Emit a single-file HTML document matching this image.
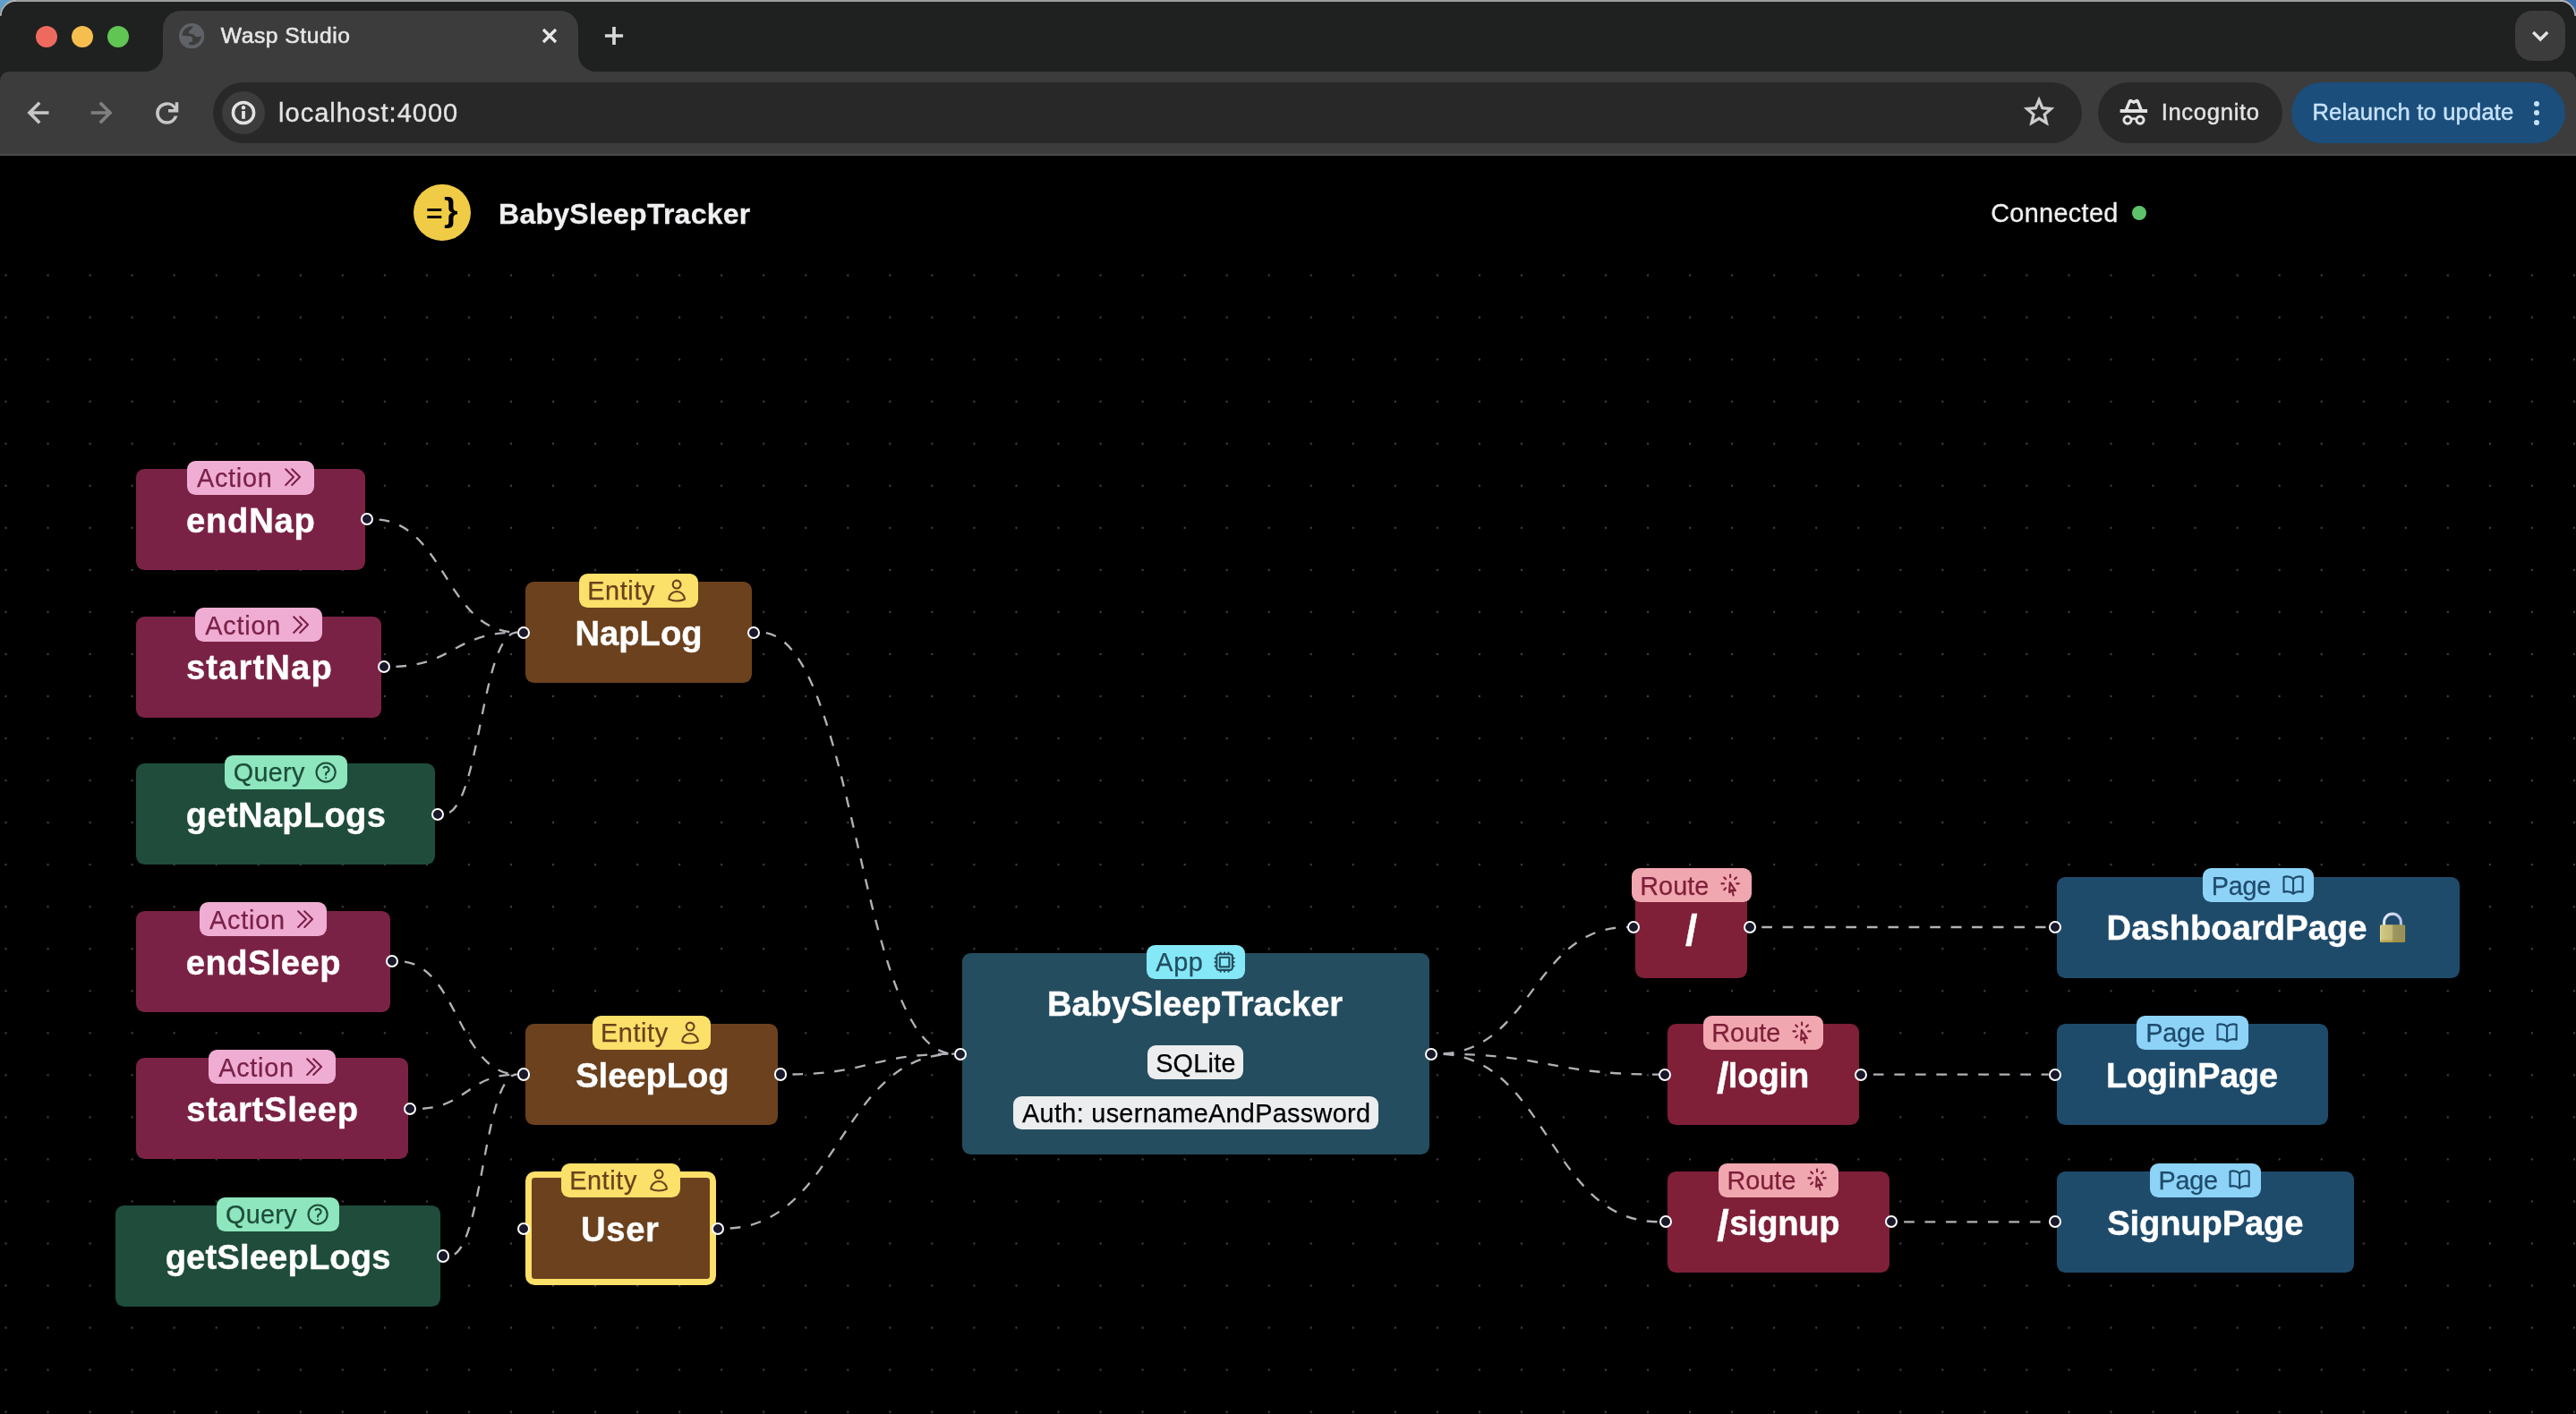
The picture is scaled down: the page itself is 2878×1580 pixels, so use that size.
<!DOCTYPE html>
<html lang="en"><head><meta charset="utf-8"><title>Wasp Studio</title>
<style>
html,body{margin:0;padding:0;background:#000;}
body{width:2878px;height:1580px;overflow:hidden;position:relative;font-family:"Liberation Sans",sans-serif;}
.t{position:absolute;white-space:pre;display:block;}
.abs{position:absolute;}
#chrome{position:absolute;left:0;top:0;width:2878px;height:174px;background:#1f2020;overflow:hidden;}
#page{position:absolute;left:0;top:0;width:2878px;height:1580px;}
.node{position:absolute;border-radius:9.4px;box-sizing:border-box;}
.badge{position:absolute;height:38.1px;border-radius:9.4px;}
.badge svg{position:absolute;top:4.95px;width:28.2px;height:28.2px;fill:none;stroke-width:1.8;stroke-linecap:round;stroke-linejoin:round;}
.h{position:absolute;width:14.1px;height:14.1px;box-sizing:border-box;border-radius:50%;background:#1a192b;border:2.35px solid #fff;}
.pill{position:absolute;height:37.6px;border-radius:9.4px;background:#ecedef;}
</style></head><body>

<div id="wrap" style="position:absolute;left:0;top:0;width:2878px;height:1580px;will-change:transform;">
<div id="page">
<svg class="abs" style="left:0;top:284px" width="2878" height="1296"><defs><pattern id="dots" x="-17.02" y="0.08" width="47.04" height="47.04" patternUnits="userSpaceOnUse"><circle cx="23.52" cy="23.52" r="1.15" fill="#434347"/></pattern></defs><rect width="2878" height="1296" fill="url(#dots)"/></svg>
<svg class="abs" style="left:0;top:0" width="2878" height="1580" fill="none" stroke="#b1b1b7" stroke-width="2.35" stroke-dasharray="11.76" stroke-dashoffset="17"><path d="M417.00,580.30 C497.35,580.30 497.35,706.60 577.70,706.60"/><path d="M435.70,745.00 C506.70,745.00 506.70,706.60 577.70,706.60"/><path d="M495.90,909.60 C536.80,909.60 536.80,706.60 577.70,706.60"/><path d="M445.40,1074.20 C511.55,1074.20 511.55,1200.50 577.70,1200.50"/><path d="M465.50,1238.90 C521.60,1238.90 521.60,1200.50 577.70,1200.50"/><path d="M501.70,1403.50 C539.70,1403.50 539.70,1200.50 577.70,1200.50"/><path d="M849.30,706.60 C957.65,706.60 957.65,1177.65 1066.00,1177.65"/><path d="M878.70,1200.50 C972.35,1200.50 972.35,1177.65 1066.00,1177.65"/><path d="M809.10,1372.65 C937.55,1372.65 937.55,1177.65 1066.00,1177.65"/><path d="M1606.10,1177.65 C1712.05,1177.65 1712.05,1036.00 1818.00,1036.00"/><path d="M1606.10,1177.65 C1729.75,1177.65 1729.75,1200.60 1853.40,1200.60"/><path d="M1606.10,1177.65 C1729.80,1177.65 1729.80,1365.30 1853.50,1365.30"/><path d="M1961.60,1036.00 C2125.10,1036.00 2125.10,1036.00 2288.60,1036.00"/><path d="M2086.20,1200.60 C2187.40,1200.60 2187.40,1200.60 2288.60,1200.60"/><path d="M2120.40,1365.30 C2204.50,1365.30 2204.50,1365.30 2288.60,1365.30"/></svg>
<div class="node" style="left:152.2px;top:523.8px;width:255.4px;height:113.0px;background:#7a2245;"></div>
<div class="badge" style="left:209.10px;top:514.50px;width:141.6px;background:#efadd3;"><svg viewBox="0 0 24 24" style="left:104.00px;stroke:#7b2148"><path d="M11.25 4.5l7.5 7.5-7.5 7.5m-6-15l7.5 7.5-7.5 7.5"/></svg></div>
<span class="t" style="left:219.89px;top:516.99px;font-size:28.8px;line-height:34.56px;color:#7b2148;letter-spacing:0.794px;-webkit-text-stroke:0.25px #7b2148;">Action</span>
<span class="t" style="left:208.05px;top:559.09px;font-size:38.2px;line-height:45.84px;font-weight:700;color:#fff;letter-spacing:0.752px;-webkit-text-stroke:0.4px #fff;">endNap</span>
<div class="node" style="left:152.2px;top:688.5px;width:274.1px;height:113.0px;background:#7a2245;"></div>
<div class="badge" style="left:218.45px;top:679.20px;width:141.6px;background:#efadd3;"><svg viewBox="0 0 24 24" style="left:104.00px;stroke:#7b2148"><path d="M11.25 4.5l7.5 7.5-7.5 7.5m-6-15l7.5 7.5-7.5 7.5"/></svg></div>
<span class="t" style="left:229.24px;top:681.99px;font-size:28.8px;line-height:34.56px;color:#7b2148;letter-spacing:0.794px;-webkit-text-stroke:0.25px #7b2148;">Action</span>
<span class="t" style="left:207.89px;top:723.09px;font-size:38.2px;line-height:45.84px;font-weight:700;color:#fff;letter-spacing:1.141px;-webkit-text-stroke:0.4px #fff;">startNap</span>
<div class="node" style="left:152.2px;top:853.1px;width:334.3px;height:113.0px;background:#1f4c3b;"></div>
<div class="badge" style="left:251.05px;top:843.80px;width:136.6px;background:#8de6bd;"><svg viewBox="0 0 24 24" style="left:99.00px;stroke:#1e4c3b"><path d="M9.879 7.519c1.171-1.025 3.071-1.025 4.242 0 1.172 1.025 1.172 2.687 0 3.712-.203.179-.43.326-.67.442-.745.361-1.45.999-1.45 1.827v.75M21 12a9 9 0 11-18 0 9 9 0 0118 0zm-9 5.25h.008v.008H12v-.008z"/></svg></div>
<span class="t" style="left:260.68px;top:845.99px;font-size:28.8px;line-height:34.56px;color:#1e4c3b;letter-spacing:0.320px;-webkit-text-stroke:0.25px #1e4c3b;">Query</span>
<span class="t" style="left:207.82px;top:888.09px;font-size:38.2px;line-height:45.84px;font-weight:700;color:#fff;letter-spacing:0.270px;-webkit-text-stroke:0.4px #fff;">getNapLogs</span>
<div class="node" style="left:152.2px;top:1017.7px;width:283.8px;height:113.0px;background:#7a2245;"></div>
<div class="badge" style="left:223.30px;top:1008.40px;width:141.6px;background:#efadd3;"><svg viewBox="0 0 24 24" style="left:104.00px;stroke:#7b2148"><path d="M11.25 4.5l7.5 7.5-7.5 7.5m-6-15l7.5 7.5-7.5 7.5"/></svg></div>
<span class="t" style="left:234.09px;top:1010.99px;font-size:28.8px;line-height:34.56px;color:#7b2148;letter-spacing:0.794px;-webkit-text-stroke:0.25px #7b2148;">Action</span>
<span class="t" style="left:207.75px;top:1053.09px;font-size:38.2px;line-height:45.84px;font-weight:700;color:#fff;letter-spacing:0.430px;-webkit-text-stroke:0.4px #fff;">endSleep</span>
<div class="node" style="left:152.2px;top:1182.4px;width:303.9px;height:113.0px;background:#7a2245;"></div>
<div class="badge" style="left:233.35px;top:1173.10px;width:141.6px;background:#efadd3;"><svg viewBox="0 0 24 24" style="left:104.00px;stroke:#7b2148"><path d="M11.25 4.5l7.5 7.5-7.5 7.5m-6-15l7.5 7.5-7.5 7.5"/></svg></div>
<span class="t" style="left:244.14px;top:1175.99px;font-size:28.8px;line-height:34.56px;color:#7b2148;letter-spacing:0.794px;-webkit-text-stroke:0.25px #7b2148;">Action</span>
<span class="t" style="left:208.34px;top:1217.09px;font-size:38.2px;line-height:45.84px;font-weight:700;color:#fff;letter-spacing:0.793px;-webkit-text-stroke:0.4px #fff;">startSleep</span>
<div class="node" style="left:128.9px;top:1347.0px;width:363.4px;height:113.0px;background:#1f4c3b;"></div>
<div class="badge" style="left:242.30px;top:1337.70px;width:136.6px;background:#8de6bd;"><svg viewBox="0 0 24 24" style="left:99.00px;stroke:#1e4c3b"><path d="M9.879 7.519c1.171-1.025 3.071-1.025 4.242 0 1.172 1.025 1.172 2.687 0 3.712-.203.179-.43.326-.67.442-.745.361-1.45.999-1.45 1.827v.75M21 12a9 9 0 11-18 0 9 9 0 0118 0zm-9 5.25h.008v.008H12v-.008z"/></svg></div>
<span class="t" style="left:251.93px;top:1339.99px;font-size:28.8px;line-height:34.56px;color:#1e4c3b;letter-spacing:0.320px;-webkit-text-stroke:0.25px #1e4c3b;">Query</span>
<span class="t" style="left:184.67px;top:1382.09px;font-size:38.2px;line-height:45.84px;font-weight:700;color:#fff;letter-spacing:0.134px;-webkit-text-stroke:0.4px #fff;">getSleepLogs</span>
<div class="node" style="left:587.1px;top:650.1px;width:252.8px;height:113.0px;background:#6b411e;"></div>
<div class="badge" style="left:647.20px;top:640.80px;width:132.6px;background:#fbe069;"><svg viewBox="0 0 24 24" style="left:95.00px;stroke:#6b401d"><path d="M15.75 6a3.75 3.75 0 11-7.5 0 3.75 3.75 0 017.5 0zM4.501 20.118a7.5 7.5 0 0114.998 0A17.933 17.933 0 0112 21.75c-2.676 0-5.216-.584-7.499-1.632z"/></svg></div>
<span class="t" style="left:656.23px;top:642.99px;font-size:28.8px;line-height:34.56px;color:#6b401d;letter-spacing:0.636px;-webkit-text-stroke:0.25px #6b401d;">Entity</span>
<span class="t" style="left:642.44px;top:685.09px;font-size:38.2px;line-height:45.84px;font-weight:700;color:#fff;letter-spacing:-0.003px;-webkit-text-stroke:0.4px #fff;">NapLog</span>
<div class="node" style="left:587.1px;top:1144.0px;width:282.2px;height:113.0px;background:#6b411e;"></div>
<div class="badge" style="left:661.90px;top:1134.70px;width:132.6px;background:#fbe069;"><svg viewBox="0 0 24 24" style="left:95.00px;stroke:#6b401d"><path d="M15.75 6a3.75 3.75 0 11-7.5 0 3.75 3.75 0 017.5 0zM4.501 20.118a7.5 7.5 0 0114.998 0A17.933 17.933 0 0112 21.75c-2.676 0-5.216-.584-7.499-1.632z"/></svg></div>
<span class="t" style="left:670.93px;top:1136.99px;font-size:28.8px;line-height:34.56px;color:#6b401d;letter-spacing:0.636px;-webkit-text-stroke:0.25px #6b401d;">Entity</span>
<span class="t" style="left:643.24px;top:1179.09px;font-size:38.2px;line-height:45.84px;font-weight:700;color:#fff;letter-spacing:-0.081px;-webkit-text-stroke:0.4px #fff;">SleepLog</span>
<div class="node" style="left:587.1px;top:1309.1px;width:212.6px;height:127.1px;background:#6b411e;border:7.06px solid #fbe069;border-radius:10.5px;"></div>
<div class="badge" style="left:627.10px;top:1299.80px;width:132.6px;background:#fbe069;"><svg viewBox="0 0 24 24" style="left:95.00px;stroke:#6b401d"><path d="M15.75 6a3.75 3.75 0 11-7.5 0 3.75 3.75 0 017.5 0zM4.501 20.118a7.5 7.5 0 0114.998 0A17.933 17.933 0 0112 21.75c-2.676 0-5.216-.584-7.499-1.632z"/></svg></div>
<span class="t" style="left:636.13px;top:1301.99px;font-size:28.8px;line-height:34.56px;color:#6b401d;letter-spacing:0.636px;-webkit-text-stroke:0.25px #6b401d;">Entity</span>
<span class="t" style="left:649.10px;top:1351.09px;font-size:38.2px;line-height:45.84px;font-weight:700;color:#fff;letter-spacing:0.649px;-webkit-text-stroke:0.4px #fff;">User</span>
<div class="node" style="left:1075.4px;top:1064.9px;width:521.3px;height:225.5px;background:#254d60;"></div>
<div class="badge" style="left:1280.60px;top:1055.60px;width:110.9px;background:#85e8f6;"><svg viewBox="0 0 24 24" style="left:73.30px;stroke:#234d60"><path d="M8.25 3v1.5M4.5 8.25H3m18 0h-1.5M4.5 12H3m18 0h-1.5m-15 3.75H3m18 0h-1.5M8.25 19.5V21M12 3v1.5m0 15V21m3.75-18v1.5m0 15V21m-9-1.5h10.5a2.25 2.25 0 002.25-2.25V6.75a2.25 2.25 0 00-2.25-2.25H6.75A2.25 2.25 0 004.5 6.75v10.5a2.25 2.25 0 002.25 2.25zm.75-12h9v9h-9v-9z"/></svg></div>
<span class="t" style="left:1291.29px;top:1057.99px;font-size:28.8px;line-height:34.56px;color:#234d60;letter-spacing:0.680px;-webkit-text-stroke:0.25px #234d60;">App</span>
<span class="t" style="left:1169.89px;top:1099.09px;font-size:38.2px;line-height:45.84px;font-weight:700;color:#fff;letter-spacing:-0.056px;-webkit-text-stroke:0.4px #fff;">BabySleepTracker</span>
<div class="pill" style="left:1282.3px;top:1168.2px;width:107.1px"></div>
<span class="t" style="left:1291.15px;top:1170.99px;font-size:28.8px;line-height:34.56px;color:#000;letter-spacing:0.245px;-webkit-text-stroke:0.25px #000;">SQLite</span>
<div class="pill" style="left:1132px;top:1224.8px;width:407.8px"></div>
<span class="t" style="left:1142.09px;top:1226.99px;font-size:28.8px;line-height:34.56px;color:#000;letter-spacing:0.330px;-webkit-text-stroke:0.25px #000;">Auth: usernameAndPassword</span>
<div class="node" style="left:1827.4px;top:979.5px;width:124.8px;height:113.0px;background:#7f1f38;"></div>
<div class="badge" style="left:1822.70px;top:970.20px;width:134.2px;background:#f1a7b0;"><svg viewBox="0 0 24 24" style="left:96.60px;stroke:#7e1f39"><path d="M15.042 21.672L13.684 16.6m0 0l-2.51 2.225.569-9.47 5.227 7.917-3.286-.672zM12 2.25V4.5m5.834.166l-1.591 1.591M20.25 10.5H18M7.757 14.743l-1.59 1.59M6 10.5H3.75m4.007-4.243l-1.59-1.59"/></svg></div>
<span class="t" style="left:1832.23px;top:972.99px;font-size:28.8px;line-height:34.56px;color:#7e1f39;letter-spacing:0.055px;-webkit-text-stroke:0.25px #7e1f39;">Route</span>
<span class="t" style="left:1883.07px;top:1010.34px;font-size:48.5px;line-height:58.2px;font-weight:700;color:#fff;letter-spacing:0.000px;-webkit-text-stroke:0.4px #fff;">/</span>
<div class="node" style="left:1862.8px;top:1144.1px;width:214.0px;height:113.0px;background:#7f1f38;"></div>
<div class="badge" style="left:1902.70px;top:1134.80px;width:134.2px;background:#f1a7b0;"><svg viewBox="0 0 24 24" style="left:96.60px;stroke:#7e1f39"><path d="M15.042 21.672L13.684 16.6m0 0l-2.51 2.225.569-9.47 5.227 7.917-3.286-.672zM12 2.25V4.5m5.834.166l-1.591 1.591M20.25 10.5H18M7.757 14.743l-1.59 1.59M6 10.5H3.75m4.007-4.243l-1.59-1.59"/></svg></div>
<span class="t" style="left:1912.23px;top:1136.99px;font-size:28.8px;line-height:34.56px;color:#7e1f39;letter-spacing:0.055px;-webkit-text-stroke:0.25px #7e1f39;">Route</span>
<span class="t" style="left:1918.10px;top:1179.09px;font-size:38.2px;line-height:45.84px;font-weight:700;color:#fff;letter-spacing:-0.168px;-webkit-text-stroke:0.4px #fff;"><span style="font-size:48.5px;line-height:0;position:relative;top:6px;letter-spacing:0;margin-right:-0.74px">/</span>login</span>
<div class="node" style="left:1862.9px;top:1308.8px;width:248.1px;height:113.0px;background:#7f1f38;"></div>
<div class="badge" style="left:1919.85px;top:1299.50px;width:134.2px;background:#f1a7b0;"><svg viewBox="0 0 24 24" style="left:96.60px;stroke:#7e1f39"><path d="M15.042 21.672L13.684 16.6m0 0l-2.51 2.225.569-9.47 5.227 7.917-3.286-.672zM12 2.25V4.5m5.834.166l-1.591 1.591M20.25 10.5H18M7.757 14.743l-1.59 1.59M6 10.5H3.75m4.007-4.243l-1.59-1.59"/></svg></div>
<span class="t" style="left:1929.38px;top:1301.99px;font-size:28.8px;line-height:34.56px;color:#7e1f39;letter-spacing:0.055px;-webkit-text-stroke:0.25px #7e1f39;">Route</span>
<span class="t" style="left:1918.20px;top:1344.09px;font-size:38.2px;line-height:45.84px;font-weight:700;color:#fff;letter-spacing:-0.352px;-webkit-text-stroke:0.4px #fff;"><span style="font-size:48.5px;line-height:0;position:relative;top:6px;letter-spacing:0;margin-right:0.52px">/</span>signup</span>
<div class="node" style="left:2298.0px;top:979.5px;width:450.2px;height:113.0px;background:#1f4b6b;"></div>
<div class="badge" style="left:2460.95px;top:970.20px;width:124.3px;background:#8dd3f7;"><svg viewBox="0 0 24 24" style="left:86.70px;stroke:#1f4b6c"><path d="M12 6.042A8.967 8.967 0 006 3.75c-1.052 0-2.062.18-3 .512v14.25A8.987 8.987 0 016 18c2.305 0 4.408.867 6 2.292m0-14.25a8.966 8.966 0 016-2.292c1.052 0 2.062.18 3 .512v14.25A8.987 8.987 0 0018 18a8.967 8.967 0 00-6 2.292m0-14.25v14.25"/></svg></div>
<span class="t" style="left:2470.78px;top:972.99px;font-size:28.8px;line-height:34.56px;color:#1f4b6c;letter-spacing:-0.238px;-webkit-text-stroke:0.25px #1f4b6c;">Page</span>
<span class="t" style="left:2353.54px;top:1014.09px;font-size:38.2px;line-height:45.84px;font-weight:700;color:#fff;letter-spacing:0.020px;-webkit-text-stroke:0.4px #fff;">DashboardPage</span>
<svg class="abs" role="img" aria-label="&#128274;" style="left:2650px;top:1010px" width="46" height="50" viewBox="2650 1010 46 50"><title>&#128274;</title><defs><linearGradient id="lkb" x1="0" y1="0" x2="1" y2="0"><stop offset="0" stop-color="#ebe391"/><stop offset="0.06" stop-color="#d2c882"/><stop offset="0.47" stop-color="#c3b977"/><stop offset="0.53" stop-color="#9e9660"/><stop offset="0.94" stop-color="#978f58"/><stop offset="1" stop-color="#b89b3e"/></linearGradient><linearGradient id="lks" x1="0" y1="0" x2="1" y2="0"><stop offset="0" stop-color="#e4e8f6"/><stop offset="0.5" stop-color="#d3dbf3"/><stop offset="1" stop-color="#b9c4e6"/></linearGradient></defs><path d="M2663.6 1034 V1030.5 A9.4 9.4 0 0 1 2682.4 1030.5 V1034" fill="none" stroke="url(#lks)" stroke-width="3.1"/><rect x="2659" y="1033.2" width="28.1" height="19.8" rx="1.6" fill="url(#lkb)"/><rect x="2659" y="1050.4" width="28.1" height="2.6" rx="1.2" fill="#a8902f" opacity="0.55"/></svg>
<div class="node" style="left:2298.0px;top:1144.1px;width:303.2px;height:113.0px;background:#1f4b6b;"></div>
<div class="badge" style="left:2387.45px;top:1134.80px;width:124.3px;background:#8dd3f7;"><svg viewBox="0 0 24 24" style="left:86.70px;stroke:#1f4b6c"><path d="M12 6.042A8.967 8.967 0 006 3.75c-1.052 0-2.062.18-3 .512v14.25A8.987 8.987 0 016 18c2.305 0 4.408.867 6 2.292m0-14.25a8.966 8.966 0 016-2.292c1.052 0 2.062.18 3 .512v14.25A8.987 8.987 0 0018 18a8.967 8.967 0 00-6 2.292m0-14.25v14.25"/></svg></div>
<span class="t" style="left:2397.28px;top:1136.99px;font-size:28.8px;line-height:34.56px;color:#1f4b6c;letter-spacing:-0.238px;-webkit-text-stroke:0.25px #1f4b6c;">Page</span>
<span class="t" style="left:2352.99px;top:1179.09px;font-size:38.2px;line-height:45.84px;font-weight:700;color:#fff;letter-spacing:-0.401px;-webkit-text-stroke:0.4px #fff;">LoginPage</span>
<div class="node" style="left:2298.0px;top:1308.8px;width:331.6px;height:113.0px;background:#1f4b6b;"></div>
<div class="badge" style="left:2401.65px;top:1299.50px;width:124.3px;background:#8dd3f7;"><svg viewBox="0 0 24 24" style="left:86.70px;stroke:#1f4b6c"><path d="M12 6.042A8.967 8.967 0 006 3.75c-1.052 0-2.062.18-3 .512v14.25A8.987 8.987 0 016 18c2.305 0 4.408.867 6 2.292m0-14.25a8.966 8.966 0 016-2.292c1.052 0 2.062.18 3 .512v14.25A8.987 8.987 0 0018 18a8.967 8.967 0 00-6 2.292m0-14.25v14.25"/></svg></div>
<span class="t" style="left:2411.48px;top:1301.99px;font-size:28.8px;line-height:34.56px;color:#1f4b6c;letter-spacing:-0.238px;-webkit-text-stroke:0.25px #1f4b6c;">Page</span>
<span class="t" style="left:2354.34px;top:1344.09px;font-size:38.2px;line-height:45.84px;font-weight:700;color:#fff;letter-spacing:-0.178px;-webkit-text-stroke:0.4px #fff;">SignupPage</span>
<div class="h" style="left:402.90px;top:573.25px"></div>
<div class="h" style="left:421.60px;top:737.95px"></div>
<div class="h" style="left:481.80px;top:902.55px"></div>
<div class="h" style="left:431.30px;top:1067.15px"></div>
<div class="h" style="left:451.40px;top:1231.85px"></div>
<div class="h" style="left:487.60px;top:1396.45px"></div>
<div class="h" style="left:577.70px;top:699.55px"></div>
<div class="h" style="left:835.20px;top:699.55px"></div>
<div class="h" style="left:577.70px;top:1193.45px"></div>
<div class="h" style="left:864.60px;top:1193.45px"></div>
<div class="h" style="left:577.70px;top:1365.60px"></div>
<div class="h" style="left:795.00px;top:1365.60px"></div>
<div class="h" style="left:1066.00px;top:1170.60px"></div>
<div class="h" style="left:1592.00px;top:1170.60px"></div>
<div class="h" style="left:1818.00px;top:1028.95px"></div>
<div class="h" style="left:1947.50px;top:1028.95px"></div>
<div class="h" style="left:1853.40px;top:1193.55px"></div>
<div class="h" style="left:2072.10px;top:1193.55px"></div>
<div class="h" style="left:1853.50px;top:1358.25px"></div>
<div class="h" style="left:2106.30px;top:1358.25px"></div>
<div class="h" style="left:2288.60px;top:1028.95px"></div>
<div class="h" style="left:2288.60px;top:1193.55px"></div>
<div class="h" style="left:2288.60px;top:1358.25px"></div>
<div class="abs" style="left:0;top:174px;width:2878px;height:110px;background:#000"></div>
<div class="abs" style="left:462.3px;top:206.1px;width:63.4px;height:63.4px;border-radius:50%;background:#f0cb45"></div>
<span class="t" style="left:475.72px;top:221.37px;font-size:28.4px;line-height:34.08px;font-weight:700;color:#000;"><span style="display:inline-block;transform:scaleX(1.12);transform-origin:0 50%;">=</span><span style="display:inline-block;font-size:36.3px;line-height:0;position:relative;top:-1.00px;margin-left:4.00px;transform:scaleX(1.10);transform-origin:0 50%;">}</span></span>
<span class="t" style="left:557.06px;top:219.96px;font-size:32px;line-height:38.4px;font-weight:700;color:#f0f0f2;letter-spacing:0.247px;-webkit-text-stroke:0.3px #f0f0f2;">BabySleepTracker</span>
<span class="t" style="left:2224.13px;top:220.99px;font-size:28.8px;line-height:34.56px;color:#f0f0f0;letter-spacing:0.359px;-webkit-text-stroke:0.3px #f0f0f0;">Connected</span>
<div class="abs" style="left:2381.9px;top:229.9px;width:16.2px;height:16.2px;border-radius:50%;background:#5ec26a"></div>
</div>
<div id="chrome">
<div class="abs" style="left:0;top:0;width:2878px;height:2px;background:#9c9c9c"></div>
<div class="abs" style="left:0;top:80px;width:2878px;height:94px;background:#3c3c3c;border-radius:10px 10px 0 0"></div>
<div class="abs" style="left:0;top:172px;width:2878px;height:2px;background:#4a4c4b"></div>
<div class="abs" style="left:182px;top:12px;width:464px;height:80px;background:#3c3c3c;border-radius:20px 20px 0 0"></div>
<svg class="abs" style="left:162px;top:60px" width="20" height="20"><path d="M20 0 V20 H0 A20 20 0 0 0 20 0Z" fill="#3c3c3c"/></svg>
<svg class="abs" style="left:646px;top:60px" width="20" height="20"><path d="M0 0 V20 H20 A20 20 0 0 1 0 0Z" fill="#3c3c3c"/></svg>
<div class="abs" style="left:40px;top:29px;width:24px;height:24px;border-radius:50%;background:#ee6a5f"></div>
<div class="abs" style="left:80px;top:29px;width:24px;height:24px;border-radius:50%;background:#f5be4f"></div>
<div class="abs" style="left:120px;top:29px;width:24px;height:24px;border-radius:50%;background:#61c554"></div>
<svg class="abs" style="left:199.8px;top:25.85px" width="28.3" height="28.3" viewBox="0 0 28.3 28.3"><circle cx="14.15" cy="14.15" r="14.15" fill="#5f6368"/><path d="M3.55 13.65 A10.6 10.6 0 0 1 15.65 3.45 C15.400 5.400 13.500 6.900 12.250 7.750 C11 8.800 10.600 10.300 11.450 11.150 C13 12.200 15.500 11.600 16.550 12.550 C17.300 13.300 17.500 14.200 18.250 14.550 C19.500 15.300 21.500 15.300 22.450 15.050 C23.500 14.800 24.300 14.400 24.950 13.950 A10.6 10.6 0 0 1 11.15 23.85 L11.15 21.800 Q11.15 21.200 11.800 21.150 L14.400 20.850 Q15.050 20.750 15.050 20.100 L15.050 17.650 C15.050 15.500 13.800 14.550 12.250 14.550 Z" fill="#3c3c3c"/></svg>
<span class="t" style="left:246.83px;top:24.97px;font-size:24.6px;line-height:29.52px;color:#e6e6e6;letter-spacing:0.552px;-webkit-text-stroke:0.6px #e6e6e6;">Wasp Studio</span>
<svg class="abs" style="left:602px;top:28.100px" width="24" height="24" viewBox="-12 -12 24 24"><path d="M-7 -7 L7 7 M7 -7 L-7 7" stroke="#e8e8e8" stroke-width="3.200" fill="none"/></svg>
<svg class="abs" style="left:672.05px;top:26px" width="28" height="28" viewBox="-14 -14 28 28"><path d="M0 -10.100 V10.100 M-10.100 0 H10.100" stroke="#d8d8d8" stroke-width="3.700" fill="none"/></svg>
<div class="abs" style="left:2809.6px;top:11.600px;width:56.5px;height:56.5px;border-radius:19px;background:#3c3c3c"></div>
<svg class="abs" style="left:2824px;top:26px" width="28" height="28" viewBox="0 0 28 28"><path d="M6.2 10 L14.2 18 L22.2 10" stroke="#e3e3e3" stroke-width="3.400" fill="none"/></svg>
<svg class="abs" style="left:24px;top:106px" width="40" height="40" viewBox="24 106 40 40" fill="none" stroke="#c7c7c7" stroke-width="3.700"><path d="M54.5 126 H33 M44.200 114.800 L33 126 L44.200 137.200"/></svg>
<svg class="abs" style="left:96px;top:106px" width="40" height="40" viewBox="96 106 40 40" fill="none" stroke="#808080" stroke-width="3.700"><path d="M101.700 126 H123 M111.800 114.800 L123 126 L111.800 137.200"/></svg>
<svg class="abs" style="left:167.900px;top:107.500px" width="37" height="37" viewBox="0 -960 960 960"><path fill="#c7c7c7" d="M480-160q-134 0-227-93t-93-227q0-134 93-227t227-93q69 0 132 28.500T720-690v-110h92v292H520v-92h168q-32-56-87.500-88T480-708q-95 0-161.500 66.500T252-480q0 95 66.500 161.500T480-252q73 0 131.500-41.500T694-404h96q-28 106-114 175t-196 69Z"/></svg>
<div class="abs" style="left:238.3px;top:92.2px;width:2087.7px;height:67.5px;border-radius:34px;background:#282828"></div>
<div class="abs" style="left:247.700px;top:102.100px;width:48.2px;height:48.2px;border-radius:50%;background:#3c3c3c"></div>
<svg class="abs" style="left:251.85px;top:106.400px" width="40" height="40" viewBox="-20 -20 40 40"><circle r="11.600" fill="none" stroke="#e3e3e3" stroke-width="3.500"/><rect x="-1.900" y="-2" width="3.800" height="8.800" fill="#e3e3e3"/><circle cy="-5.800" r="2.200" fill="#e3e3e3"/></svg>
<span class="t" style="left:311.05px;top:108.80px;font-size:29px;line-height:34.8px;color:#e3e3e3;letter-spacing:1.007px;-webkit-text-stroke:0.35px #e3e3e3;">localhost:4000</span>
<svg class="abs" style="left:2257.5px;top:105.400px" width="40.2" height="40.2" viewBox="0 0 24 24"><path fill="#cfcfcf" stroke="#cfcfcf" stroke-width="0.35" d="M22 9.240l-7.190-.620L12 2 9.190 8.630 2 9.240l5.460 4.730L5.820 21 12 17.270 18.180 21l-1.630-7.030L22 9.240zM12 15.400l-3.760 2.270 1-4.280-3.320-2.880 4.380-.38L12 6.100l1.710 4.040 4.380.38-3.320 2.880 1 4.280L12 15.400z"/></svg>
<div class="abs" style="left:2344px;top:92.2px;width:206px;height:67.5px;border-radius:34px;background:#282828"></div>
<svg class="abs" style="left:2364px;top:106px" width="40" height="40" viewBox="0 0 40 40" fill="none" stroke="#e3e3e3"><path d="M4.6 18 H35.1" stroke-width="3.900"/><path d="M11.3 17.500 L15.400 7.200 Q15.900 6.200 17 6.700 L19.850 8.300 L22.700 6.700 Q23.800 6.200 24.300 7.200 L28.400 17.500" stroke-width="3.400" stroke-linejoin="round"/><circle cx="13" cy="28.100" r="4.100" stroke-width="3"/><circle cx="27" cy="28.100" r="4.100" stroke-width="3"/><path d="M17.100 27.300 Q20 25.600 22.900 27.300" stroke-width="2.600"/></svg>
<span class="t" style="left:2414.63px;top:110.02px;font-size:25.6px;line-height:30.72px;color:#e3e3e3;letter-spacing:0.699px;-webkit-text-stroke:0.45px #e3e3e3;">Incognito</span>
<div class="abs" style="left:2560px;top:92.2px;width:306px;height:67.5px;border-radius:34px;background:#1b4e7a"></div>
<span class="t" style="left:2583.40px;top:110.02px;font-size:25.6px;line-height:30.72px;color:#c6e2fc;letter-spacing:0.174px;-webkit-text-stroke:0.45px #c6e2fc;">Relaunch to update</span>
<div class="abs" style="left:2830.7px;top:112.5px;width:6.4px;height:6.4px;border-radius:50%;background:#c6e2fc"></div>
<div class="abs" style="left:2830.7px;top:123.1px;width:6.4px;height:6.4px;border-radius:50%;background:#c6e2fc"></div>
<div class="abs" style="left:2830.7px;top:133.8px;width:6.4px;height:6.4px;border-radius:50%;background:#c6e2fc"></div>
<svg class="abs" style="left:0;top:0" width="18" height="18"><path d="M0 0 H18 A18 18 0 0 0 0 18 Z" fill="#5d9fc9"/><path d="M0 17 A17 17 0 0 1 17 0" transform="translate(0.8,0.8)" stroke="#b4b4b4" stroke-width="1.8" fill="none"/></svg>
<svg class="abs" style="left:2860px;top:0" width="18" height="18"><path d="M18 0 H0 A18 18 0 0 1 18 18 Z" fill="#3b6ea8"/><path d="M18 17 A17 17 0 0 0 1 0" transform="translate(-0.8,0.8)" stroke="#b4b4b4" stroke-width="1.8" fill="none"/></svg>
</div>
</div>
</body></html>
